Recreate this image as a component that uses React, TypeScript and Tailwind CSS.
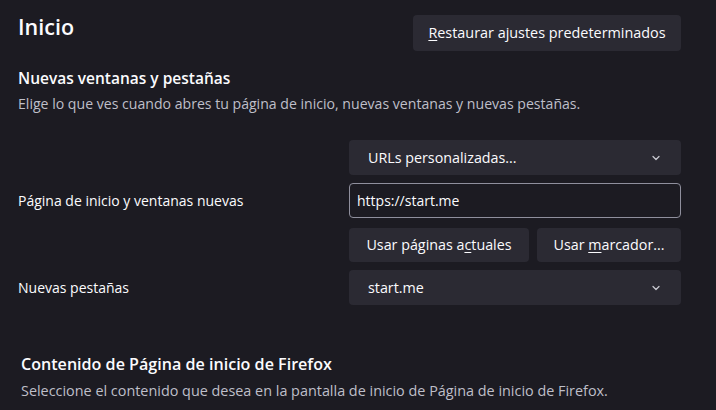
import { ChevronDown } from "lucide-react";

const font = { fontFamily: "'Open Sans', 'Noto Sans', sans-serif" };

function Select({ value }: { value: string }) {
  return (
    <button className="h-[35px] w-full flex items-center justify-between rounded-[4px] bg-[#2b2a33] pl-[19px] pr-[19px] text-[14.3px] text-[#fbfbfe]">
      <span>{value}</span>
      <ChevronDown size={12} strokeWidth={2.5} className="text-[#c8c8d0]" />
    </button>
  );
}

export default function App() {
  return (
    <div className="w-[716px] h-[410px] overflow-hidden bg-[#1c1b22] text-[#fbfbfe]" style={font}>
      <div className="pl-[18px] pr-[35px]">
        {/* Header */}
        <div className="flex items-start justify-between pt-[15px]">
          <h1 className="text-[21.5px] font-semibold leading-[26px] -mt-[1px]">Inicio</h1>
          <button className="h-[36px] w-[268px] rounded-[4px] bg-[#2b2a33] text-[14.4px] text-[#fbfbfe]">
            <span className="underline underline-offset-2">R</span>estaurar ajustes predeterminados
          </button>
        </div>

        {/* Nuevas ventanas */}
        <div className="mt-[17px]">
          <h2 className="text-[15.5px] font-semibold leading-[20px]">Nuevas ventanas y pestañas</h2>
          <p className="mt-[6px] text-[14.1px] leading-[20px] text-[#bfbfc9]">
            Elige lo que ves cuando abres tu página de inicio, nuevas ventanas y nuevas pestañas.
          </p>
        </div>

        <div className="mt-[26px] flex">
          <div className="w-[331px] shrink-0 flex flex-col">
            <div className="h-[43px]" />
            <div className="h-[35px] flex items-center text-[14px]">Página de inicio y ventanas nuevas</div>
            <div className="h-[52px]" />
            <div className="h-[35px] flex items-center text-[14px]">Nuevas pestañas</div>
          </div>
          <div className="flex-1 flex flex-col gap-[8px]">
            <Select value="URLs personalizadas..." />
            <div className="h-[35px] flex items-center rounded-[4px] border border-[#8f8f9d] px-[7px] text-[14px]">
              https://start.me
            </div>
            <div className="flex gap-[8px] h-[34px] mt-[2px]">
              <button className="w-[180px] rounded-[4px] bg-[#2b2a33] text-[14.3px] text-[#fbfbfe]">
                Usar páginas a<span className="underline underline-offset-2">c</span>tuales
              </button>
              <button className="flex-1 rounded-[4px] bg-[#2b2a33] text-[14.3px] text-[#fbfbfe]">
                Usar <span className="underline underline-offset-2">m</span>arcador...
              </button>
            </div>
            <Select value="start.me" />
          </div>
        </div>

        {/* Contenido */}
        <div className="mt-[48px] ml-[3px]">
          <h2 className="text-[16.1px] font-semibold leading-[22px]">Contenido de Página de inicio de Firefox</h2>
          <p className="mt-[5px] text-[14.4px] leading-[22px] text-[#bfbfc9]">
            Seleccione el contenido que desea en la pantalla de inicio de Página de inicio de Firefox.
          </p>
        </div>
      </div>
    </div>
  );
}
